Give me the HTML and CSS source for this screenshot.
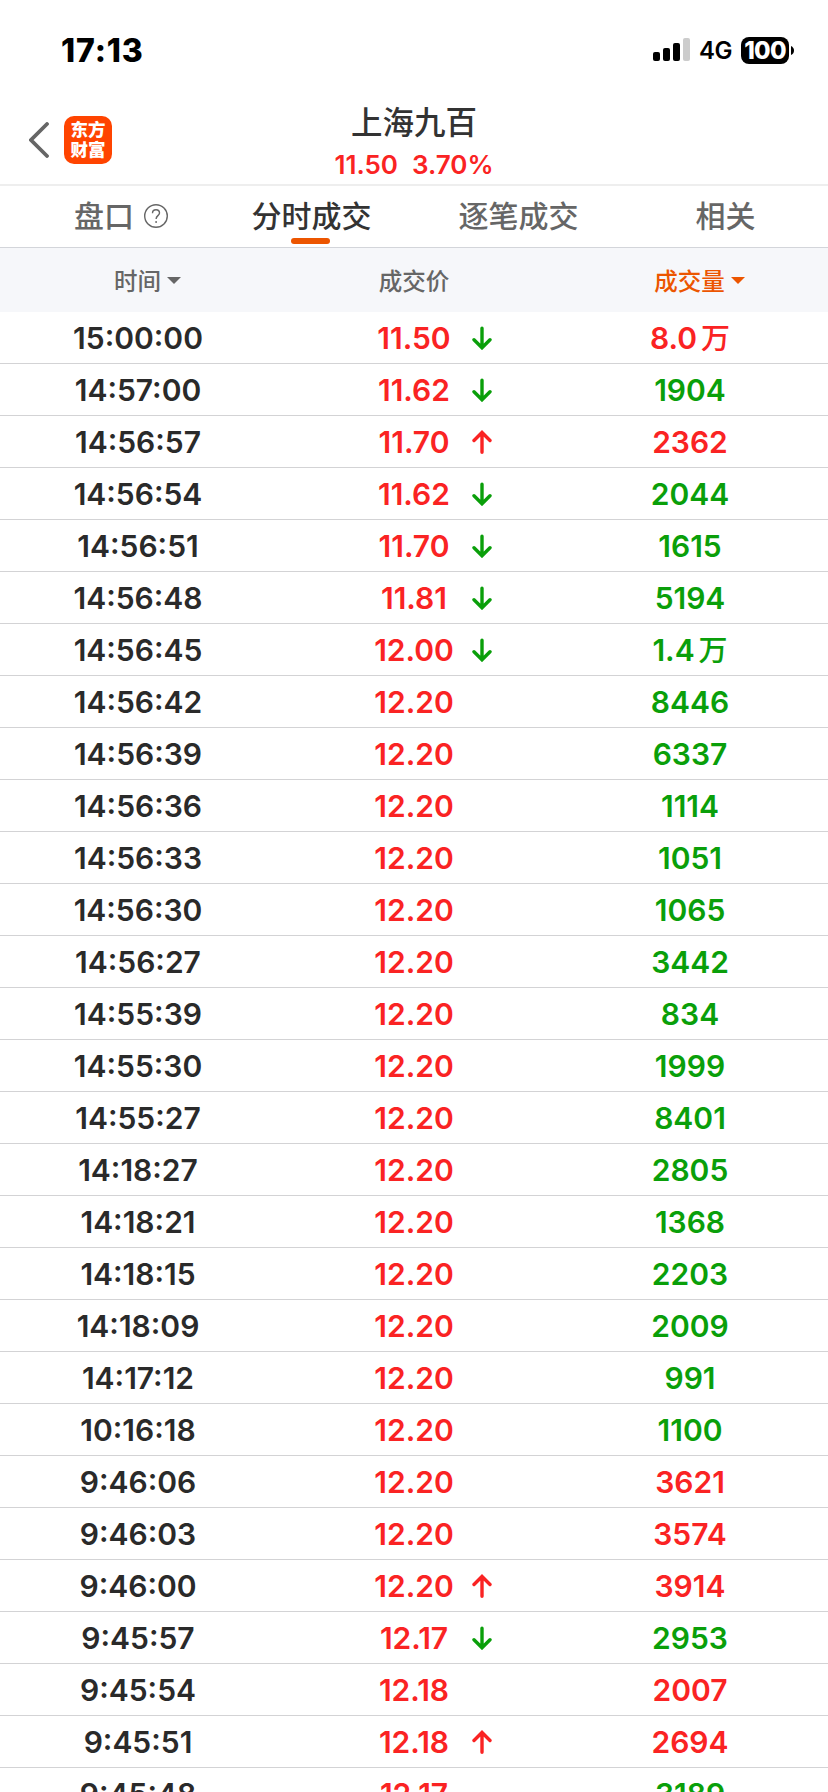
FILE: index.html
```html
<!DOCTYPE html>
<html lang="zh-CN">
<head>
    <meta charset="UTF-8">
    <meta name="viewport" content="width=device-width, initial-scale=1.0">
    <title>上海九百 - 分时成交</title>
    <link rel="stylesheet" href="styles.css">
</head>
<body>

    <svg class="defs">
        <symbol id="down" viewBox="0 0 20 24"><path d="M10 2.2V21.5M2 13.8l8 8 8-8" /></symbol>
        <symbol id="up" viewBox="0 0 20 24"><path d="M10 22.2V2.5M2 10.5l8-8 8 8" /></symbol>
    </svg>

    <div class="status-bar">
        <div class="clock">17:13</div>
        <div class="status-icons">
            <svg class="signal" width="38" height="24" viewBox="0 0 38 24">
                <rect x="0" y="14" width="7" height="9" rx="2" />
                <rect x="10" y="10" width="7" height="13" rx="2" />
                <rect x="20" y="5" width="7" height="18" rx="2" />
                <rect x="30" y="0" width="7" height="23" rx="2" fill="#ccc" />
            </svg>
            <span class="network">4G</span>
            <span class="battery">100</span>
            <svg class="battery-tip" width="3" height="9" viewBox="0 0 3 9"><path d="M0 0q3 1.5 3 4.5T0 9z" /></svg>
        </div>
    </div>

    <header class="header">
        <div class="header-left">
            <svg class="back" width="20" height="36" viewBox="0 0 20 36"><path d="M18 2L2 18l16 16" /></svg>
            <div class="logo"><span>东方</span><span>财富</span></div>
        </div>
        <div class="stock">
            <div class="stock-name">上海九百</div>
            <div class="stock-price"><span>11.50</span><span>3.70%</span></div>
        </div>
    </header>

    <nav class="tabs">
        <div class="tab">盘口
            <svg class="help" width="24" height="24" viewBox="0 0 24 24">
                <circle cx="12" cy="12" r="11.3" />
                <path d="M8.5 9.2c0-2.2 1.5-3.5 3.5-3.5s3.5 1.3 3.5 3.2c0 2.7-3.4 2.8-3.4 6" />
                <path d="M12.1 17v2" />
            </svg>
        </div>
        <div class="tab active">分时成交</div>
        <div class="tab">逐笔成交</div>
        <div class="tab">相关</div>
    </nav>

    <div class="columns">
        <div class="column">时间<i class="caret"></i></div>
        <div class="column">成交价</div>
        <div class="column sorted">成交量<i class="caret"></i></div>
    </div>

    <main class="list">
        <div class="row"><span>15:00:00</span><span class="price">11.50<svg class="arrow green"><use href="#down" /></svg></span><span class="red">8.0<b>万</b></span></div>
        <div class="row"><span>14:57:00</span><span class="price">11.62<svg class="arrow green"><use href="#down" /></svg></span><span class="green">1904</span></div>
        <div class="row"><span>14:56:57</span><span class="price">11.70<svg class="arrow red"><use href="#up" /></svg></span><span class="red">2362</span></div>
        <div class="row"><span>14:56:54</span><span class="price">11.62<svg class="arrow green"><use href="#down" /></svg></span><span class="green">2044</span></div>
        <div class="row"><span>14:56:51</span><span class="price">11.70<svg class="arrow green"><use href="#down" /></svg></span><span class="green">1615</span></div>
        <div class="row"><span>14:56:48</span><span class="price">11.81<svg class="arrow green"><use href="#down" /></svg></span><span class="green">5194</span></div>
        <div class="row"><span>14:56:45</span><span class="price">12.00<svg class="arrow green"><use href="#down" /></svg></span><span class="green">1.4<b>万</b></span></div>
        <div class="row"><span>14:56:42</span><span class="price">12.20</span><span class="green">8446</span></div>
        <div class="row"><span>14:56:39</span><span class="price">12.20</span><span class="green">6337</span></div>
        <div class="row"><span>14:56:36</span><span class="price">12.20</span><span class="green">1114</span></div>
        <div class="row"><span>14:56:33</span><span class="price">12.20</span><span class="green">1051</span></div>
        <div class="row"><span>14:56:30</span><span class="price">12.20</span><span class="green">1065</span></div>
        <div class="row"><span>14:56:27</span><span class="price">12.20</span><span class="green">3442</span></div>
        <div class="row"><span>14:55:39</span><span class="price">12.20</span><span class="green">834</span></div>
        <div class="row"><span>14:55:30</span><span class="price">12.20</span><span class="green">1999</span></div>
        <div class="row"><span>14:55:27</span><span class="price">12.20</span><span class="green">8401</span></div>
        <div class="row"><span>14:18:27</span><span class="price">12.20</span><span class="green">2805</span></div>
        <div class="row"><span>14:18:21</span><span class="price">12.20</span><span class="green">1368</span></div>
        <div class="row"><span>14:18:15</span><span class="price">12.20</span><span class="green">2203</span></div>
        <div class="row"><span>14:18:09</span><span class="price">12.20</span><span class="green">2009</span></div>
        <div class="row"><span>14:17:12</span><span class="price">12.20</span><span class="green">991</span></div>
        <div class="row"><span>10:16:18</span><span class="price">12.20</span><span class="green">1100</span></div>
        <div class="row"><span>9:46:06</span><span class="price">12.20</span><span class="red">3621</span></div>
        <div class="row"><span>9:46:03</span><span class="price">12.20</span><span class="red">3574</span></div>
        <div class="row"><span>9:46:00</span><span class="price">12.20<svg class="arrow red"><use href="#up" /></svg></span><span class="red">3914</span></div>
        <div class="row"><span>9:45:57</span><span class="price">12.17<svg class="arrow green"><use href="#down" /></svg></span><span class="green">2953</span></div>
        <div class="row"><span>9:45:54</span><span class="price">12.18</span><span class="red">2007</span></div>
        <div class="row"><span>9:45:51</span><span class="price">12.18<svg class="arrow red"><use href="#up" /></svg></span><span class="red">2694</span></div>
        <div class="row"><span>9:45:48</span><span class="price">12.17</span><span class="green">3189</span></div>
    </main>

</body>
</html>
```
FILE: styles.css
```css
* { margin: 0; padding: 0; box-sizing: border-box; }
body { height: 1792px; overflow: hidden; background: #fff; color: #2a2a2a; font-family: Inter, "Noto Sans CJK SC", sans-serif; }
.defs { position: absolute; width: 0; height: 0; }
.red { color: #fa2323; }
.green { color: #0a9f0a; }

.status-bar { height: 100px; padding: 0 34px 0 61px; display: flex; justify-content: space-between; align-items: center; color: #000; }
.clock { font-size: 32px; font-weight: 800; letter-spacing: 0.9px; }
.status-icons { display: flex; align-items: center; }
.network { margin-left: 8px; width: 34px; font-size: 24px; font-weight: 600; letter-spacing: -0.5px; }
.battery { margin-left: 8px; width: 48px; height: 27px; line-height: 27px; border-radius: 8px; background: #000; color: #fff; font-size: 24px; font-weight: 800; text-align: center; letter-spacing: -0.8px; }
.battery-tip { margin-left: 2px; }

.header { height: 86px; display: grid; grid-template-columns: 1fr auto 1fr; border-bottom: 2px solid #eee; }
.header-left { padding: 16px 0 0 29px; display: flex; align-items: flex-start; gap: 15px; }
.back { margin-top: 6px; fill: none; stroke: #666; stroke-width: 3.8; stroke-linecap: round; }
.logo { width: 48px; height: 48px; padding-top: 3px; border-radius: 10px; background: #ff4400; color: #fff; display: flex; flex-direction: column; align-items: center; font-family: "Noto Sans CJK SC", sans-serif; font-size: 17.5px; font-weight: 800; line-height: 20px; }
.stock { text-align: center; }
.stock-name { margin-top: 3px; font-size: 31.5px; font-weight: 500; line-height: 40px; color: #333; }
.stock-price { display: flex; justify-content: center; gap: 14px; font-size: 26px; font-weight: 600; line-height: 44px; color: #fa2323; }

.tabs { height: 62px; display: grid; grid-template-columns: 207px 207px 207px 207px; border-bottom: 1px solid #d3d5da; font-size: 30px; color: #666; }
.tab { position: relative; padding: 8px 0 0 2px; display: flex; justify-content: center; align-items: flex-start; line-height: 44px; font-weight: 500; }
.tab:first-child { padding-left: 35px; }
.tab.active { color: #333; }
.tab.active::after { content: ""; position: absolute; left: 84px; bottom: 3px; width: 39px; height: 6px; border-radius: 3px; background: #ec5500; }
.help { margin: 10px 0 0 10px; fill: none; stroke: #666; stroke-width: 1.4; }

.columns { height: 64px; display: grid; grid-template-columns: 276px 276px 276px; background: #f6f7fa; font-size: 23.5px; font-weight: 500; color: #666; }
.column { display: flex; justify-content: center; align-items: center; }
.column:first-child, .sorted { padding-left: 19px; }
.sorted { color: #ec5500; }
.caret { margin-left: 6px; border: 7px solid transparent; border-top-color: currentColor; border-bottom: 0; }

.row { height: 52px; display: grid; grid-template-columns: 276px 276px 276px; border-bottom: 1px solid #d3d3d5; font-size: 30px; font-weight: 600; line-height: 53px; text-align: center; }
.row b { margin-left: 4px; font-size: 29px; font-weight: 500; line-height: 1; }
.price { position: relative; color: #fa2323; }
/* hangs right of the price so the number stays centred */
.arrow { position: absolute; left: 196px; top: 14px; width: 20px; height: 24px; fill: none; stroke: currentColor; stroke-width: 3.4; stroke-linecap: round; }
.arrow.green { color: #0a9f0a; }
```
